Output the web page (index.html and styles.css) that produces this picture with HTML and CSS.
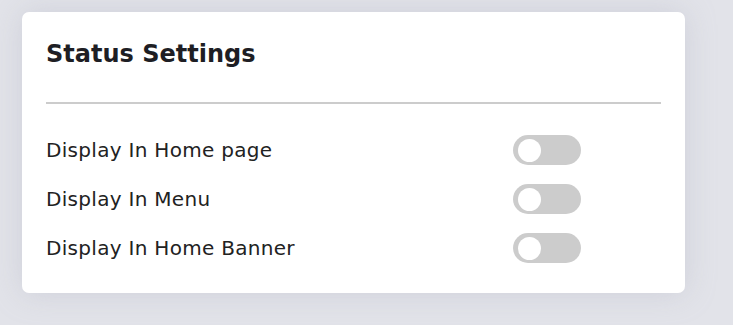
FILE: index.html
```html
<!DOCTYPE html>
<html lang="en">
<head>
  <meta charset="UTF-8">
  <meta name="viewport" content="width=device-width, initial-scale=1.0">
  <title>Status Settings</title>
  <link rel="stylesheet" href="styles.css">
</head>
<body>
  <div class="card">
    <h2 class="card-title">Status Settings</h2>
    <hr class="divider">
    <div class="setting-row">
      <span class="setting-label">Display In Home page</span>
      <label class="switch"><input type="checkbox"><span class="slider"></span></label>
    </div>
    <div class="setting-row">
      <span class="setting-label">Display In Menu</span>
      <label class="switch"><input type="checkbox"><span class="slider"></span></label>
    </div>
    <div class="setting-row">
      <span class="setting-label">Display In Home Banner</span>
      <label class="switch"><input type="checkbox"><span class="slider"></span></label>
    </div>
  </div>
</body>
</html>
```

FILE: styles.css
```css
body {
  margin: 0;
  padding: 12px 48px 32px 22px;
  font-family: "DejaVu Sans", sans-serif;
  background-color: #e2e3e9;
  color: #222;
}
.card {
  background-color: #fff;
  border-radius: 7px;
  padding: 26px 24px 21px 24px;
  box-shadow: 0 0 30px rgba(170, 172, 190, 0.35);
}
.card-title {
  margin: 0;
  font-size: 24px;
  font-weight: 700;
  line-height: 32px;
  color: #1e1e24;
}
.divider {
  border: none;
  border-top: 2px solid #ccc;
  margin: 32px 0 21px 0;
}
.setting-row {
  display: grid;
  grid-template-columns: 467px 68px;
  align-items: center;
  height: 49px;
}
.setting-label {
  font-size: 20px;
  letter-spacing: 0.3px;
  color: #222;
}
.switch {
  position: relative;
  display: block;
  width: 68px;
  height: 30px;
}
.switch input {
  display: none;
}
.slider {
  position: absolute;
  inset: 0;
  background-color: #ccc;
  border-radius: 15px;
  cursor: pointer;
}
.slider::before {
  content: "";
  position: absolute;
  left: 5px;
  top: 4px;
  width: 23px;
  height: 23px;
  border-radius: 50%;
  background-color: #fff;
}
```
